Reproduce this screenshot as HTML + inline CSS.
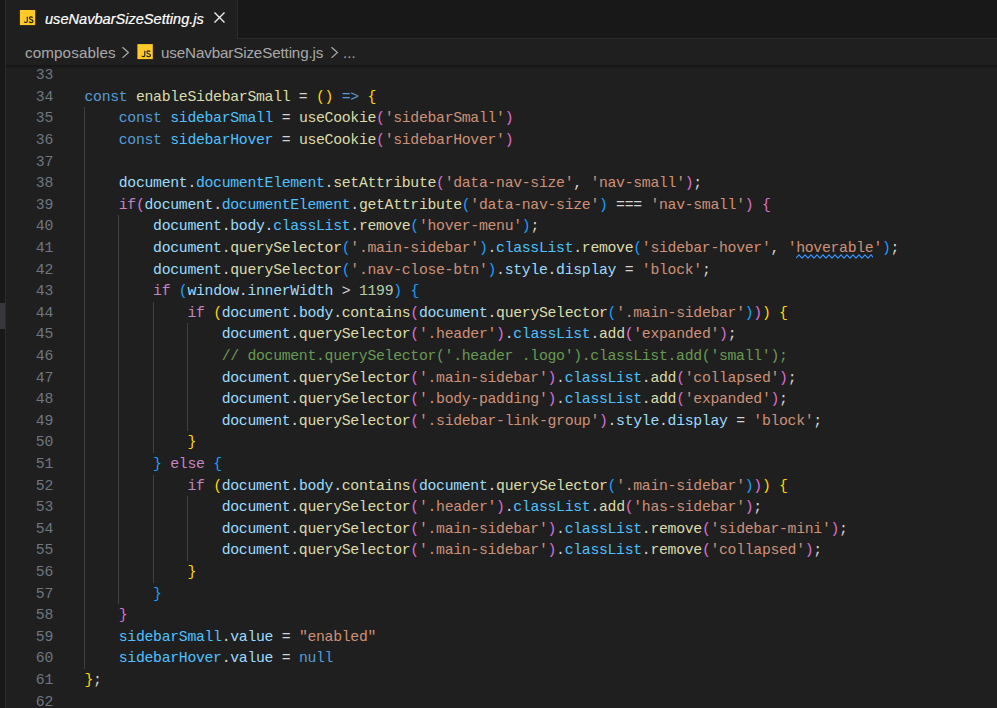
<!DOCTYPE html>
<html><head><meta charset="utf-8"><title>useNavbarSizeSetting.js</title>
<style>
html,body{margin:0;padding:0;background:#1f1f1f;}
body{width:997px;height:708px;overflow:hidden;position:relative;font-family:"Liberation Sans",sans-serif;}
#strip{position:absolute;left:0;top:0;width:5px;height:708px;background:#181818;border-right:1px solid #2b2b2b;}
#striphl{position:absolute;left:0;top:303px;width:5px;height:26px;background:#37373d;}
#tabs{position:absolute;left:6px;top:0;width:991px;height:38px;background:#181818;border-bottom:1px solid #2b2b2b;}
#tab{position:absolute;left:0;top:0;width:231px;height:39px;background:#1f1f1f;border-right:1px solid #2b2b2b;}
.js{position:absolute;}
#tablabel{position:absolute;left:39px;top:9px;font-size:15.3px;line-height:20px;font-style:italic;color:#ffffff;white-space:pre;-webkit-text-stroke:0.2px #ffffff;transform:scaleX(0.953);transform-origin:0 0;}
#close{position:absolute;left:207px;top:11px;}
#crumbs{position:absolute;left:6px;top:39px;width:991px;height:24px;background:#1f1f1f;color:#a9a9a9;font-size:15.2px;line-height:24px;white-space:pre;}
#crumbs span{position:absolute;top:2.4px;}
#shadow{position:absolute;left:6px;top:65px;width:991px;height:4px;background:linear-gradient(rgba(0,0,0,0.32),rgba(0,0,0,0));}
#code{position:absolute;left:0;top:0;width:997px;height:708px;font-family:"Liberation Mono",monospace;font-size:14.8px;letter-spacing:-0.306px;color:#d4d4d4;}
.ln{position:absolute;left:0;width:53px;text-align:right;color:#6e7681;white-space:pre;height:21.6px;line-height:21.6px;}
.l{position:absolute;left:84.5px;white-space:pre;height:21.6px;line-height:21.6px;}
.g{position:absolute;width:1px;background:#404040;}
.k{color:#569cd6}.f{color:#dcdcaa}.c{color:#4fc1ff}.v{color:#9cdcfe}.s{color:#ce9178}.n{color:#b5cea8}.m{color:#6a9955}.t{color:#c586c0}
.b1{color:#ffd700}.b2{color:#da70d6}.b3{color:#179fff}
.sq{position:relative;}
.sq svg{position:absolute;left:0;bottom:-2.6px;}
</style></head><body>
<div id="strip"></div><div id="striphl"></div>
<div id="tabs"><div id="tab">
<svg class="js" style="left:13px;top:9px" width="18" height="18" viewBox="0 0 18 18"><rect x="0.90" y="1.00" width="15.30" height="15.10" fill="#ffca28"/><path transform="translate(0.90 1.00)" d="M7.4 6.7 V11.1 Q7.4 12.5 6.0 12.5 Q4.9 12.5 4.3 11.6 M12.9 7.6 Q12.1 6.8 11 6.8 Q9.5 6.8 9.5 8.1 Q9.5 9.2 11.2 9.6 Q13.1 10 13.1 11.2 Q13.1 12.6 11.3 12.6 Q9.9 12.6 9.1 11.6" stroke="#222" stroke-width="1.15" fill="none"/></svg>
<div id="tablabel">useNavbarSizeSetting.js</div>
<svg id="close" width="13" height="13" viewBox="0 0 13 13"><path d="M1.5 1.5 L11.5 11.5 M11.5 1.5 L1.5 11.5" stroke="#f0f0f0" stroke-width="1.4" fill="none"/></svg>
</div></div>
<div id="crumbs"><span style="left:19px;letter-spacing:0.12px">composables</span>
<svg style="position:absolute;left:114px;top:7px" width="12" height="14" viewBox="0 0 12 14"><path d="M2.5 1.2 L8.4 6.55 L2.5 11.9" stroke="#a9a9a9" stroke-width="1.25" fill="none"/></svg>
<svg class="js" style="left:131px;top:4px" width="18" height="18" viewBox="0 0 18 18"><rect x="0.40" y="1.10" width="15.40" height="15.00" fill="#ffca28"/><path transform="translate(0.40 1.10)" d="M7.4 6.7 V11.1 Q7.4 12.5 6.0 12.5 Q4.9 12.5 4.3 11.6 M12.9 7.6 Q12.1 6.8 11 6.8 Q9.5 6.8 9.5 8.1 Q9.5 9.2 11.2 9.6 Q13.1 10 13.1 11.2 Q13.1 12.6 11.3 12.6 Q9.9 12.6 9.1 11.6" stroke="#222" stroke-width="1.15" fill="none"/></svg>
<span style="left:155px;letter-spacing:-0.14px">useNavbarSizeSetting.js</span>
<svg style="position:absolute;left:323px;top:7px" width="12" height="14" viewBox="0 0 12 14"><path d="M2.5 1.2 L8.4 6.55 L2.5 11.9" stroke="#a9a9a9" stroke-width="1.25" fill="none"/></svg>
<span style="left:337px">...</span>
</div>
<div id="code">
<div class="g" style="left:84px;top:107.3px;height:561.6px"></div>
<div class="g" style="left:118px;top:215.3px;height:388.8px"></div>
<div class="g" style="left:153px;top:301.7px;height:151.2px"></div>
<div class="g" style="left:153px;top:474.5px;height:108.0px"></div>
<div class="g" style="left:187px;top:323.3px;height:108.0px"></div>
<div class="g" style="left:187px;top:496.1px;height:64.8px"></div>
<div class="ln" style="top:65.2px">33</div>
<div class="ln" style="top:86.8px">34</div><div class="l" style="top:86.8px"><span class="k">const</span> <span class="f">enableSidebarSmall</span> = <span class="b1">()</span> <span class="k">=&gt;</span> <span class="b1">{</span></div>
<div class="ln" style="top:108.4px">35</div><div class="l" style="top:108.4px">    <span class="k">const</span> <span class="c">sidebarSmall</span> = <span class="f">useCookie</span><span class="b2">(</span><span class="s">'sidebarSmall'</span><span class="b2">)</span></div>
<div class="ln" style="top:130.0px">36</div><div class="l" style="top:130.0px">    <span class="k">const</span> <span class="c">sidebarHover</span> = <span class="f">useCookie</span><span class="b2">(</span><span class="s">'sidebarHover'</span><span class="b2">)</span></div>
<div class="ln" style="top:151.6px">37</div>
<div class="ln" style="top:173.2px">38</div><div class="l" style="top:173.2px">    <span class="v">document</span>.<span class="c">documentElement</span>.<span class="f">setAttribute</span><span class="b2">(</span><span class="s">'data-nav-size'</span>, <span class="s">'nav-small'</span><span class="b2">)</span>;</div>
<div class="ln" style="top:194.8px">39</div><div class="l" style="top:194.8px">    <span class="t">if</span><span class="b2">(</span><span class="v">document</span>.<span class="c">documentElement</span>.<span class="f">getAttribute</span><span class="b3">(</span><span class="s">'data-nav-size'</span><span class="b3">)</span> === <span class="s">'nav-small'</span><span class="b2">)</span> <span class="b2">{</span></div>
<div class="ln" style="top:216.4px">40</div><div class="l" style="top:216.4px">        <span class="v">document</span>.<span class="v">body</span>.<span class="c">classList</span>.<span class="f">remove</span><span class="b3">(</span><span class="s">'hover-menu'</span><span class="b3">)</span>;</div>
<div class="ln" style="top:238.0px">41</div><div class="l" style="top:238.0px">        <span class="v">document</span>.<span class="f">querySelector</span><span class="b3">(</span><span class="s">'.main-sidebar'</span><span class="b3">)</span>.<span class="c">classList</span>.<span class="f">remove</span><span class="b3">(</span><span class="s">'sidebar-hover'</span>, <span class="s">'</span><span class="s sq">hoverable<svg width="77.2" height="5" viewBox="0 0 77.2 5"><path d="M0 4.1 L3.0 0.9 L6.0 4.1 L9.0 0.9 L12.0 4.1 L15.0 0.9 L18.0 4.1 L21.0 0.9 L24.0 4.1 L27.0 0.9 L30.0 4.1 L33.0 0.9 L36.0 4.1 L39.0 0.9 L42.0 4.1 L45.0 0.9 L48.0 4.1 L51.0 0.9 L54.0 4.1 L57.0 0.9 L60.0 4.1 L63.0 0.9 L66.0 4.1 L69.0 0.9 L72.0 4.1 L75.0 0.9 L78.0 4.1" stroke="#3794ff" stroke-width="1.15" fill="none"/></svg></span><span class="s">'</span><span class="b3">)</span>;</div>
<div class="ln" style="top:259.6px">42</div><div class="l" style="top:259.6px">        <span class="v">document</span>.<span class="f">querySelector</span><span class="b3">(</span><span class="s">'.nav-close-btn'</span><span class="b3">)</span>.<span class="v">style</span>.<span class="v">display</span> = <span class="s">'block'</span>;</div>
<div class="ln" style="top:281.2px">43</div><div class="l" style="top:281.2px">        <span class="t">if</span> <span class="b3">(</span><span class="v">window</span>.<span class="v">innerWidth</span> &gt; <span class="n">1199</span><span class="b3">)</span> <span class="b3">{</span></div>
<div class="ln" style="top:302.8px">44</div><div class="l" style="top:302.8px">            <span class="t">if</span> <span class="b1">(</span><span class="v">document</span>.<span class="v">body</span>.<span class="f">contains</span><span class="b2">(</span><span class="v">document</span>.<span class="f">querySelector</span><span class="b3">(</span><span class="s">'.main-sidebar'</span><span class="b3">)</span><span class="b2">)</span><span class="b1">)</span> <span class="b1">{</span></div>
<div class="ln" style="top:324.4px">45</div><div class="l" style="top:324.4px">                <span class="v">document</span>.<span class="f">querySelector</span><span class="b2">(</span><span class="s">'.header'</span><span class="b2">)</span>.<span class="c">classList</span>.<span class="f">add</span><span class="b2">(</span><span class="s">'expanded'</span><span class="b2">)</span>;</div>
<div class="ln" style="top:346.0px">46</div><div class="l" style="top:346.0px">                <span class="m">// document.querySelector('.header .logo').classList.add('small');</span></div>
<div class="ln" style="top:367.6px">47</div><div class="l" style="top:367.6px">                <span class="v">document</span>.<span class="f">querySelector</span><span class="b2">(</span><span class="s">'.main-sidebar'</span><span class="b2">)</span>.<span class="c">classList</span>.<span class="f">add</span><span class="b2">(</span><span class="s">'collapsed'</span><span class="b2">)</span>;</div>
<div class="ln" style="top:389.2px">48</div><div class="l" style="top:389.2px">                <span class="v">document</span>.<span class="f">querySelector</span><span class="b2">(</span><span class="s">'.body-padding'</span><span class="b2">)</span>.<span class="c">classList</span>.<span class="f">add</span><span class="b2">(</span><span class="s">'expanded'</span><span class="b2">)</span>;</div>
<div class="ln" style="top:410.8px">49</div><div class="l" style="top:410.8px">                <span class="v">document</span>.<span class="f">querySelector</span><span class="b2">(</span><span class="s">'.sidebar-link-group'</span><span class="b2">)</span>.<span class="v">style</span>.<span class="v">display</span> = <span class="s">'block'</span>;</div>
<div class="ln" style="top:432.4px">50</div><div class="l" style="top:432.4px">            <span class="b1">}</span></div>
<div class="ln" style="top:454.0px">51</div><div class="l" style="top:454.0px">        <span class="b3">}</span> <span class="t">else</span> <span class="b3">{</span></div>
<div class="ln" style="top:475.6px">52</div><div class="l" style="top:475.6px">            <span class="t">if</span> <span class="b1">(</span><span class="v">document</span>.<span class="v">body</span>.<span class="f">contains</span><span class="b2">(</span><span class="v">document</span>.<span class="f">querySelector</span><span class="b3">(</span><span class="s">'.main-sidebar'</span><span class="b3">)</span><span class="b2">)</span><span class="b1">)</span> <span class="b1">{</span></div>
<div class="ln" style="top:497.2px">53</div><div class="l" style="top:497.2px">                <span class="v">document</span>.<span class="f">querySelector</span><span class="b2">(</span><span class="s">'.header'</span><span class="b2">)</span>.<span class="c">classList</span>.<span class="f">add</span><span class="b2">(</span><span class="s">'has-sidebar'</span><span class="b2">)</span>;</div>
<div class="ln" style="top:518.8px">54</div><div class="l" style="top:518.8px">                <span class="v">document</span>.<span class="f">querySelector</span><span class="b2">(</span><span class="s">'.main-sidebar'</span><span class="b2">)</span>.<span class="c">classList</span>.<span class="f">remove</span><span class="b2">(</span><span class="s">'sidebar-mini'</span><span class="b2">)</span>;</div>
<div class="ln" style="top:540.4px">55</div><div class="l" style="top:540.4px">                <span class="v">document</span>.<span class="f">querySelector</span><span class="b2">(</span><span class="s">'.main-sidebar'</span><span class="b2">)</span>.<span class="c">classList</span>.<span class="f">remove</span><span class="b2">(</span><span class="s">'collapsed'</span><span class="b2">)</span>;</div>
<div class="ln" style="top:562.0px">56</div><div class="l" style="top:562.0px">            <span class="b1">}</span></div>
<div class="ln" style="top:583.6px">57</div><div class="l" style="top:583.6px">        <span class="b3">}</span></div>
<div class="ln" style="top:605.2px">58</div><div class="l" style="top:605.2px">    <span class="b2">}</span></div>
<div class="ln" style="top:626.8px">59</div><div class="l" style="top:626.8px">    <span class="c">sidebarSmall</span>.<span class="v">value</span> = <span class="s">"enabled"</span></div>
<div class="ln" style="top:648.4px">60</div><div class="l" style="top:648.4px">    <span class="c">sidebarHover</span>.<span class="v">value</span> = <span class="k">null</span></div>
<div class="ln" style="top:670.0px">61</div><div class="l" style="top:670.0px"><span class="b1">}</span>;</div>
<div class="ln" style="top:691.6px">62</div>
</div>
<div id="shadow"></div>
</body></html>
